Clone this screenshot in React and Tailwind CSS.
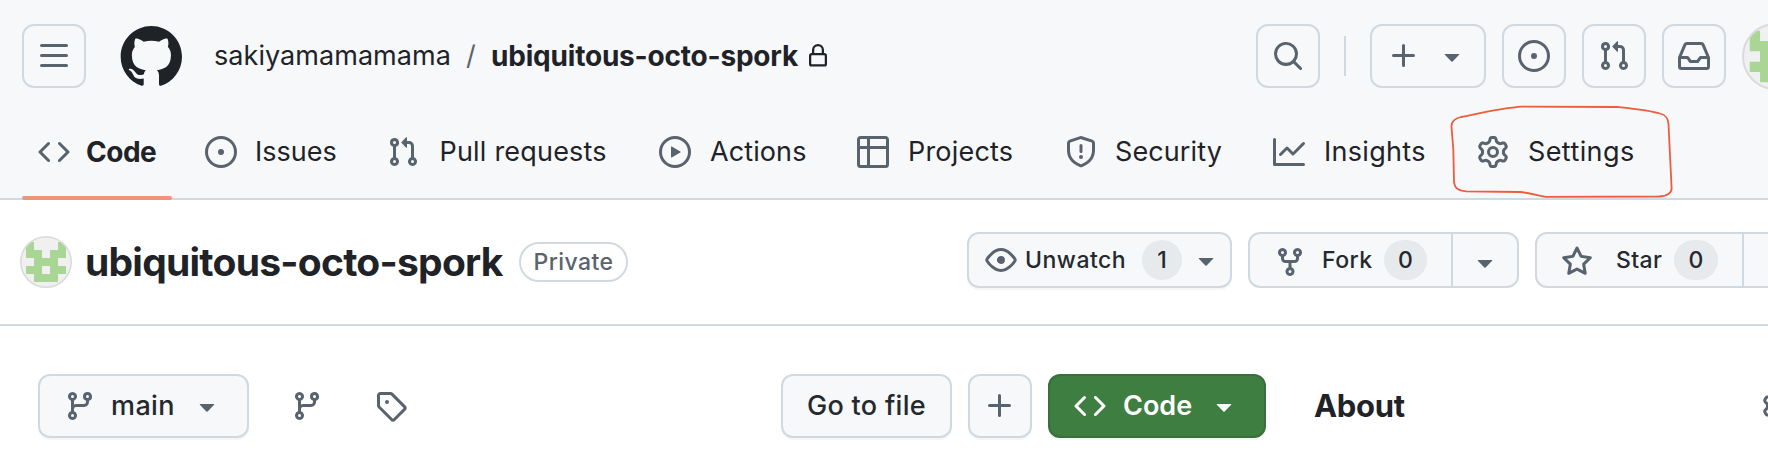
const P = {
  bars: "M1 2.75A.75.75 0 0 1 1.75 2h12.5a.75.75 0 0 1 0 1.5H1.75A.75.75 0 0 1 1 2.75Zm0 5A.75.75 0 0 1 1.75 7h12.5a.75.75 0 0 1 0 1.5H1.75A.75.75 0 0 1 1 7.75ZM1.75 12h12.5a.75.75 0 0 1 0 1.5H1.75a.75.75 0 0 1 0-1.5Z",
  code: "m11.28 3.22 4.25 4.25a.75.75 0 0 1 0 1.06l-4.25 4.25a.749.749 0 0 1-1.275-.326.749.749 0 0 1 .215-.734L13.94 8l-3.72-3.72a.749.749 0 0 1 .326-1.275.749.749 0 0 1 .734.215Zm-6.56 0a.751.751 0 0 1 1.042.018.751.751 0 0 1 .018 1.042L2.06 8l3.72 3.72a.749.749 0 0 1-.326 1.275.749.749 0 0 1-.734-.215L.47 8.53a.75.75 0 0 1 0-1.06Z",
  issue: "M8 9.5a1.5 1.5 0 1 0 0-3 1.5 1.5 0 0 0 0 3ZM8 0a8 8 0 1 1 0 16A8 8 0 0 1 8 0ZM1.5 8a6.5 6.5 0 1 0 13 0 6.5 6.5 0 0 0-13 0Z",
  pull: "M1.5 3.25a2.25 2.25 0 1 1 3 2.122v5.256a2.251 2.251 0 1 1-1.5 0V5.372A2.25 2.25 0 0 1 1.5 3.25Zm5.677-.177L9.573.677A.25.25 0 0 1 10 .854V2.5h1A2.5 2.5 0 0 1 13.5 5v5.628a2.251 2.251 0 1 1-1.5 0V5a1 1 0 0 0-1-1h-1v1.646a.25.25 0 0 1-.427.177L7.177 3.427a.25.25 0 0 1 0-.354ZM3.75 2.5a.75.75 0 1 0 0 1.5.75.75 0 0 0 0-1.5Zm0 9.5a.75.75 0 1 0 0 1.5.75.75 0 0 0 0-1.5Zm8.25.75a.75.75 0 1 0 1.5 0 .75.75 0 0 0-1.5 0Z",
  play: "M8 0a8 8 0 1 1 0 16A8 8 0 0 1 8 0ZM1.5 8a6.5 6.5 0 1 0 13 0 6.5 6.5 0 0 0-13 0Zm4.879-2.773 4.264 2.559a.25.25 0 0 1 0 .428l-4.264 2.559A.25.25 0 0 1 6 10.559V5.442a.25.25 0 0 1 .379-.215Z",
  table: "M0 1.75C0 .784.784 0 1.75 0h12.5C15.216 0 16 .784 16 1.75v12.5A1.75 1.75 0 0 1 14.25 16H1.75A1.75 1.75 0 0 1 0 14.25ZM6.5 6.5v8h7.75a.25.25 0 0 0 .25-.25V6.5Zm8-1.5V1.75a.25.25 0 0 0-.25-.25H6.5V5Zm-13 1.5v7.75c0 .138.112.25.25.25H5v-8ZM5 5V1.5H1.75a.25.25 0 0 0-.25.25V5Z",
  shield: "M7.467.133a1.748 1.748 0 0 1 1.066 0l5.25 1.68A1.75 1.75 0 0 1 15 3.48V7c0 1.566-.32 3.182-1.303 4.682-.983 1.498-2.585 2.813-5.032 3.855a1.697 1.697 0 0 1-1.33 0c-2.447-1.042-4.049-2.357-5.032-3.855C1.32 10.182 1 8.566 1 7V3.48a1.75 1.75 0 0 1 1.217-1.667Zm.61 1.429a.25.25 0 0 0-.153 0l-5.25 1.68a.25.25 0 0 0-.174.238V7c0 1.358.275 2.666 1.057 3.86.784 1.194 2.121 2.34 4.366 3.297a.196.196 0 0 0 .154 0c2.245-.956 3.582-2.104 4.366-3.298C13.225 9.666 13.5 8.36 13.5 7V3.48a.251.251 0 0 0-.174-.237l-5.25-1.68ZM8.75 4.75v3a.75.75 0 0 1-1.5 0v-3a.75.75 0 0 1 1.5 0ZM9 10.5a1 1 0 1 1-2 0 1 1 0 0 1 2 0Z",
  graph: "M1.5 1.75V13.5h13.75a.75.75 0 0 1 0 1.5H.75a.75.75 0 0 1-.75-.75V1.75a.75.75 0 0 1 1.5 0Zm14.28 2.53-5.25 5.25a.75.75 0 0 1-1.06 0L7 7.06 4.28 9.78a.751.751 0 0 1-1.042-.018.751.751 0 0 1-.018-1.042l3.25-3.25a.75.75 0 0 1 1.06 0L10 7.94l4.72-4.72a.751.751 0 0 1 1.042.018.751.751 0 0 1 .018 1.042Z",
  gear: "M8 0a8.2 8.2 0 0 1 .701.031C9.444.095 9.99.645 10.16 1.29l.288 1.107c.018.066.079.158.212.224.231.114.454.243.668.386.123.082.233.09.299.071l1.103-.303c.644-.176 1.392.021 1.82.63.27.385.506.792.704 1.218.315.675.111 1.422-.364 1.891l-.814.806c-.049.048-.098.147-.088.294.016.257.016.515 0 .772-.01.147.038.246.088.294l.814.806c.475.469.679 1.216.364 1.891a7.977 7.977 0 0 1-.704 1.217c-.428.61-1.176.807-1.82.63l-1.102-.302c-.067-.019-.177-.011-.3.071a5.909 5.909 0 0 1-.668.386c-.133.066-.194.158-.211.224l-.29 1.106c-.168.646-.715 1.196-1.458 1.26a8.006 8.006 0 0 1-1.402 0c-.743-.064-1.289-.614-1.458-1.26l-.289-1.106c-.018-.066-.079-.158-.212-.224a5.738 5.738 0 0 1-.668-.386c-.123-.082-.233-.09-.299-.071l-1.103.303c-.644.176-1.392-.021-1.82-.63a8.12 8.12 0 0 1-.704-1.218c-.315-.675-.111-1.422.363-1.891l.815-.806c.05-.048.098-.147.088-.294a6.214 6.214 0 0 1 0-.772c.01-.147-.038-.246-.088-.294l-.815-.806C.635 6.045.431 5.298.746 4.623a7.92 7.92 0 0 1 .704-1.217c.428-.61 1.176-.807 1.82-.63l1.102.302c.067.019.177.011.3-.071.214-.143.437-.272.668-.386.133-.066.194-.158.211-.224l.29-1.106C6.009.645 6.556.095 7.299.03 7.53.01 7.764 0 8 0Zm-.571 1.525c-.036.003-.108.036-.137.146l-.289 1.105c-.147.561-.549.967-.998 1.189-.173.086-.34.183-.5.29-.417.278-.97.423-1.529.27l-1.103-.303c-.109-.03-.175.016-.195.045-.22.312-.412.644-.573.99-.014.031-.021.11.059.19l.815.806c.411.406.562.957.53 1.456a4.709 4.709 0 0 0 0 .582c.032.499-.119 1.05-.53 1.456l-.815.806c-.081.08-.073.159-.059.19.162.346.353.677.573.989.02.03.085.076.195.046l1.102-.303c.56-.153 1.113-.008 1.53.27.161.107.328.204.501.29.447.222.85.629.997 1.189l.289 1.105c.029.109.101.143.137.146a6.6 6.6 0 0 0 1.142 0c.036-.003.108-.036.137-.146l.289-1.105c.147-.561.549-.967.998-1.189.173-.086.34-.183.5-.29.417-.278.97-.423 1.529-.27l1.103.303c.109.029.175-.016.195-.045.22-.313.411-.644.573-.99.014-.031.021-.11-.059-.19l-.815-.806c-.411-.406-.562-.957-.53-1.456a4.709 4.709 0 0 0 0-.582c-.032-.499.119-1.05.53-1.456l.815-.806c.081-.08.073-.159.059-.19a6.464 6.464 0 0 0-.573-.989c-.02-.03-.085-.076-.195-.046l-1.102.303c-.56.153-1.113.008-1.53-.27a4.44 4.44 0 0 0-.501-.29c-.447-.222-.85-.629-.997-1.189l-.289-1.105c-.029-.11-.101-.143-.137-.146a6.6 6.6 0 0 0-1.142 0ZM11 8a3 3 0 1 1-6 0 3 3 0 0 1 6 0ZM9.5 8a1.5 1.5 0 1 0-3.001.001A1.5 1.5 0 0 0 9.5 8Z",
  lock: "M4 4a4 4 0 0 1 8 0v2h.25c.966 0 1.75.784 1.75 1.75v5.5A1.75 1.75 0 0 1 12.25 15h-8.5A1.75 1.75 0 0 1 2 13.25v-5.5C2 6.784 2.784 6 3.75 6H4Zm8.25 3.5h-8.5a.25.25 0 0 0-.25.25v5.5c0 .138.112.25.25.25h8.5a.25.25 0 0 0 .25-.25v-5.5a.25.25 0 0 0-.25-.25ZM10.5 6V4a2.5 2.5 0 1 0-5 0v2Z",
  search: "M10.68 11.74a6 6 0 0 1-7.922-8.982 6 6 0 0 1 8.982 7.922l3.04 3.04a.749.749 0 0 1-.326 1.275.749.749 0 0 1-.734-.215ZM11.5 7a4.499 4.499 0 1 0-8.997 0A4.499 4.499 0 0 0 11.5 7Z",
  plus: "M7.75 2a.75.75 0 0 1 .75.75V7h4.25a.75.75 0 0 1 0 1.5H8.5v4.25a.75.75 0 0 1-1.5 0V8.5H2.75a.75.75 0 0 1 0-1.5H7V2.75A.75.75 0 0 1 7.75 2Z",
  caret: "m4.427 7.427 3.396 3.396a.25.25 0 0 0 .354 0l3.396-3.396A.25.25 0 0 0 11.396 7H4.604a.25.25 0 0 0-.177.427Z",
  inbox: "M2.8 2.06A1.75 1.75 0 0 1 4.41 1h7.18c.7 0 1.333.417 1.61 1.06l2.74 6.395c.04.093.06.194.06.295v4.5A1.75 1.75 0 0 1 14.25 15H1.75A1.75 1.75 0 0 1 0 13.25v-4.5c0-.101.02-.202.06-.295Zm1.61.44a.25.25 0 0 0-.23.152L1.887 8H4.75a.75.75 0 0 1 .6.3L6.625 10h2.75l1.275-1.7a.75.75 0 0 1 .6-.3h2.863L11.82 2.652a.25.25 0 0 0-.23-.152Zm10.09 7h-2.875l-1.275 1.7a.75.75 0 0 1-.6.3h-3.5a.75.75 0 0 1-.6-.3L4.375 9.5H1.5v3.75c0 .138.112.25.25.25h12.5a.25.25 0 0 0 .25-.25Z",
  eye: "M8 2c1.981 0 3.671.992 4.933 2.078 1.27 1.091 2.187 2.345 2.637 3.023a1.62 1.62 0 0 1 0 1.798c-.45.678-1.367 1.932-2.637 3.023C11.67 13.008 9.981 14 8 14c-1.981 0-3.671-.992-4.933-2.078C1.797 10.83.88 9.576.43 8.898a1.62 1.62 0 0 1 0-1.798c.45-.677 1.367-1.931 2.637-3.022C4.33 2.992 6.019 2 8 2ZM1.679 7.932a.12.12 0 0 0 0 .136c.411.622 1.241 1.75 2.366 2.717C5.176 11.758 6.527 12.5 8 12.5c1.473 0 2.825-.742 3.955-1.715 1.124-.967 1.954-2.096 2.366-2.717a.12.12 0 0 0 0-.136c-.412-.621-1.242-1.75-2.366-2.717C10.824 4.242 9.473 3.5 8 3.5c-1.473 0-2.825.742-3.955 1.715-1.124.967-1.954 2.096-2.366 2.717ZM8 10a2 2 0 1 1-.001-3.999A2 2 0 0 1 8 10Z",
  fork: "M5 5.372v.878c0 .414.336.75.75.75h4.5a.75.75 0 0 0 .75-.75v-.878a2.25 2.25 0 1 1 1.5 0v.878a2.25 2.25 0 0 1-2.25 2.25h-1.5v2.128a2.251 2.251 0 1 1-1.5 0V8.5h-1.5A2.25 2.25 0 0 1 3.5 6.25v-.878a2.25 2.25 0 1 1 1.5 0ZM5 3.25a.75.75 0 1 0-1.5 0 .75.75 0 0 0 1.5 0Zm6.75.75a.75.75 0 1 0 0-1.5.75.75 0 0 0 0 1.5Zm-3 8.75a.75.75 0 1 0-1.5 0 .75.75 0 0 0 1.5 0Z",
  star: "M8 .25a.75.75 0 0 1 .673.418l1.882 3.815 4.21.612a.75.75 0 0 1 .416 1.279l-3.046 2.97.719 4.192a.751.751 0 0 1-1.088.791L8 12.347l-3.766 1.98a.75.75 0 0 1-1.088-.79l.72-4.194L.818 6.374a.75.75 0 0 1 .416-1.28l4.21-.611L7.327.668A.75.75 0 0 1 8 .25Zm0 2.445L6.615 5.5a.75.75 0 0 1-.564.41l-3.097.45 2.24 2.184a.75.75 0 0 1 .216.664l-.528 3.084 2.769-1.456a.75.75 0 0 1 .698 0l2.77 1.456-.53-3.084a.75.75 0 0 1 .216-.664l2.24-2.183-3.096-.45a.75.75 0 0 1-.564-.41L8 2.694Z",
  branch: "M9.5 3.25a2.25 2.25 0 1 1 3 2.122V6A2.5 2.5 0 0 1 10 8.5H6a1 1 0 0 0-1 1v1.128a2.251 2.251 0 1 1-1.5 0V5.372a2.25 2.25 0 1 1 1.5 0v1.836A2.493 2.493 0 0 1 6 7h4a1 1 0 0 0 1-1v-.628A2.25 2.25 0 0 1 9.5 3.25Zm-6 0a.75.75 0 1 0 1.5 0 .75.75 0 0 0-1.5 0Zm8.25-.75a.75.75 0 1 0 0 1.5.75.75 0 0 0 0-1.5ZM4.25 12a.75.75 0 1 0 0 1.5.75.75 0 0 0 0-1.5Z",
  tag: "M1 7.775V2.75C1 1.784 1.784 1 2.75 1h5.025c.464 0 .91.184 1.238.513l6.25 6.25a1.75 1.75 0 0 1 0 2.474l-5.026 5.026a1.75 1.75 0 0 1-2.474 0l-6.25-6.25A1.752 1.752 0 0 1 1 7.775Zm1.5 0c0 .066.026.13.073.177l6.25 6.25a.25.25 0 0 0 .354 0l5.025-5.025a.25.25 0 0 0 0-.354l-6.25-6.25a.25.25 0 0 0-.177-.073H2.75a.25.25 0 0 0-.25.25ZM6 5a1 1 0 1 1 0 2 1 1 0 0 1 0-2Z",
};

const MARK =
  "M12.5.75C6.146.75 1 5.896 1 12.25c0 5.089 3.292 9.387 7.863 10.91.575.101.79-.244.79-.546 0-.273-.014-1.178-.014-2.142-2.889.532-3.636-.704-3.866-1.35-.13-.331-.69-1.352-1.18-1.625-.402-.216-.977-.748-.014-.762.906-.014 1.553.834 1.769 1.179 1.035 1.74 2.688 1.25 3.349.948.1-.747.402-1.25.733-1.538-2.559-.287-5.232-1.279-5.232-5.678 0-1.25.445-2.285 1.178-3.09-.115-.288-.517-1.467.115-3.048 0 0 .963-.302 3.163 1.179.92-.259 1.897-.388 2.875-.388.977 0 1.955.13 2.875.388 2.2-1.495 3.162-1.179 3.162-1.179.633 1.581.23 2.76.115 3.048.733.805 1.179 1.825 1.179 3.09 0 4.413-2.688 5.39-5.247 5.678.417.36.776 1.05.776 2.128 0 1.538-.014 2.774-.014 3.162 0 .302.216.662.79.547C20.709 21.637 24 17.324 24 12.25 24 5.896 18.854.75 12.5.75Z";

function Icon({ name, className = "" }) {
  return (
    <svg viewBox="0 0 16 16" fill="currentColor" fillRule="evenodd" className={`size-8 shrink-0 ${className}`}>
      <path d={P[name]} />
    </svg>
  );
}

function Avatar({ className }) {
  return (
    <svg viewBox="0 0 52 52" className={`shrink-0 ${className}`}>
      <defs>
        <clipPath id="avatar-round">
          <circle cx="26" cy="26" r="25" />
        </clipPath>
      </defs>
      <circle cx="26" cy="26" r="25.2" fill="#f0f0f0" />
      <path
        clipPath="url(#avatar-round)"
        fill="#a9d694"
        d="M6 6h8v8h8v8h8v-8h8v-8h8v16h-8v8h8v8h-8v8h-24v-8h-8v-8h8v-8h-8ZM22 30v8h8v-8Z"
        fillRule="evenodd"
      />
      <circle cx="26" cy="26" r="25.2" fill="none" stroke="#dadbdc" strokeWidth="1.6" />
    </svg>
  );
}

function HeaderButton({ icon, className = "" }) {
  return (
    <button className={`flex size-16 shrink-0 items-center justify-center rounded-xl border-2 border-[#d1d9e0] text-[#59636e] ${className}`}>
      <Icon name={icon} />
    </button>
  );
}

const TABS = [
  { icon: "code", label: "Code", cls: "w-[71px] text-[28px] font-bold tracking-[-0.5px]" },
  { icon: "issue", label: "Issues", cls: "w-[86px] pl-[2px]" },
  { icon: "pull", label: "Pull requests", cls: "w-[176px] pl-[4.5px] tracking-[0.2px]" },
  { icon: "play", label: "Actions", cls: "w-[102px] pl-[3px] tracking-[0.1px]" },
  { icon: "table", label: "Projects", cls: "w-[112px] pl-[3px] tracking-[0.2px]" },
  { icon: "shield", label: "Security", cls: "w-[112px] pl-[2px] tracking-[0.1px]" },
  { icon: "graph", label: "Insights", cls: "w-[108px] pl-[3px] tracking-[0.3px]" },
  { icon: "gear", label: "Settings", cls: "w-[112px] pl-[3px] tracking-[0.4px]" },
];

function Count({ children, className }) {
  return (
    <span className={`flex h-10 shrink-0 items-center justify-center rounded-full bg-[#e7eaed] ${className}`}>{children}</span>
  );
}

const BTN = "flex shrink-0 items-center rounded-xl border-2 border-[#d1d9e0] bg-[#f6f8fa] font-medium text-[#25292e]";

export default function App() {
  return (
    <div className="relative h-[466px] w-[1768px] overflow-hidden bg-white font-['Inter',sans-serif] text-[27px] whitespace-nowrap text-[#1f2328]">
      <header className="h-[200px] border-b-2 border-[#d1d9e0] bg-[#f6f8fa]">
        <div className="flex h-28 items-center pl-[22px]">
          <HeaderButton icon="bars" />
          <svg viewBox="0 0 24 24" fill="currentColor" className="ml-8 size-16 shrink-0">
            <path d={MARK} />
          </svg>
          <span className="ml-8 w-[252px] shrink-0 tracking-[0.05px]">sakiyamamamama</span>
          <span className="w-[25px] shrink-0 text-[#59636e]">/</span>
          <span className="w-[315px] shrink-0 text-[28px] font-bold tracking-[-0.2px]">ubiquitous-octo-spork</span>
          <svg viewBox="0 0 16 16" fill="currentColor" fillRule="evenodd" className="size-6 shrink-0">
            <path d={P.lock} />
          </svg>
          <HeaderButton icon="search" className="ml-[426px]" />
          <div className="ml-6 h-10 w-0.5 shrink-0 bg-[#d1d9e0]" />
          <button className="ml-6 flex h-16 w-[116px] shrink-0 items-center rounded-xl border-2 border-[#d1d9e0] pl-4 text-[#59636e]">
            <Icon name="plus" />
            <Icon name="caret" className="ml-4" />
          </button>
          <HeaderButton icon="issue" className="ml-4" />
          <HeaderButton icon="pull" className="ml-4" />
          <HeaderButton icon="inbox" className="ml-4" />
          <Avatar className="ml-4 size-[67px]" />
        </div>
        <nav className="flex h-[88px] gap-4 pl-[22px]">
          {TABS.map((t, i) => (
            <a key={t.label} className="flex shrink-0 flex-col px-0">
              <span className="flex h-[84px] items-center gap-4 px-4 pb-1">
                <Icon name={t.icon} className="text-[#59636e]" />
                <span className={t.cls}>{t.label}</span>
              </span>
              {i === 0 && <span className="h-1 w-[150px] shrink-0 rounded-full bg-[#f0937b]" />}
            </a>
          ))}
        </nav>
      </header>

      <section className="flex h-[126px] border-b-2 border-[#d1d9e0] pl-5">
        <Avatar className="mt-9 size-[52px]" />
        <h1 className="mt-9 ml-[13px] w-[434px] shrink-0 text-[39px] leading-[52px] font-bold tracking-[-0.75px]">ubiquitous-octo-spork</h1>
        <span className="mt-[42px] flex h-10 w-[109px] shrink-0 items-center justify-center rounded-full border-2 border-[#d1d9e0] text-[23px] font-medium tracking-[0.4px] text-[#59636e]">
          Private
        </span>
        <div className="mt-8 ml-[339px] flex gap-4 text-[23px]">
          <button className={`${BTN} h-14 w-[265px] pl-4 shadow-[0_2px_0_rgba(31,35,40,0.04)]`}>
            <Icon name="eye" className="text-[#59636e]" />
            <span className="ml-2 w-[117px] text-left tracking-[0.5px]">Unwatch</span>
            <Count className="w-10">1</Count>
            <Icon name="caret" className="ml-2 text-[#59636e]" />
          </button>
          <div className={`${BTN} h-14 w-[271px] pl-6`}>
            <Icon name="fork" className="mt-1 text-[#59636e]" />
            <span className="ml-4 w-[62px] tracking-[0.5px]">Fork</span>
            <Count className="w-[43px]">0</Count>
            <div className="ml-6 flex h-[52px] items-center border-l-2 border-[#d1d9e0] pl-4 text-[#59636e]">
              <Icon name="caret" className="mt-1" />
            </div>
          </div>
          <div className={`${BTN} h-14 w-[290px] pl-6`}>
            <Icon name="star" className="mt-1 text-[#59636e]" />
            <span className="ml-[23px] w-[58px] tracking-[0.4px]">Star</span>
            <Count className="w-11">0</Count>
            <div className="ml-6 h-[52px] border-l-2 border-[#d1d9e0]" />
          </div>
        </div>
      </section>

      <section className="flex h-40 items-center pl-[38px]">
        <button className={`${BTN} h-16 w-[211px] pl-6 shadow-[0_2px_0_rgba(31,35,40,0.04)]`}>
          <Icon name="branch" className="text-[#59636e]" />
          <span className="ml-[15px] w-[80px] text-left tracking-[0.4px]">main</span>
          <Icon name="caret" className="text-[#59636e]" />
        </button>
        <Icon name="branch" className="ml-[42px] text-[#59636e]" />
        <Icon name="tag" className="ml-[52px] text-[#59636e]" />
        <button className={`${BTN} ml-[374px] h-16 w-[171px] justify-center tracking-[0.3px] shadow-[0_2px_0_rgba(31,35,40,0.04)]`}>Go to file</button>
        <button className={`${BTN} ml-4 h-16 w-16 justify-center shadow-[0_2px_0_rgba(31,35,40,0.04)]`}>
          <Icon name="plus" className="text-[#59636e]" />
        </button>
        <button className="ml-4 flex h-16 w-[218px] shrink-0 items-center rounded-xl border-2 border-[#386f3a] bg-[#3f7e41] pl-6 font-semibold text-white shadow-[0_2px_0_rgba(31,35,40,0.04)]">
          <Icon name="code" />
          <span className="ml-[17px] w-[85px] text-left">Code</span>
          <Icon name="caret" />
        </button>
        <h2 className="ml-12 w-[448px] shrink-0 text-[31px] font-bold tracking-[-0.3px]">About</h2>
        <Icon name="gear" className="text-[#59636e]" />
      </section>

      {/* hand-drawn outline around the Settings tab */}
      <svg viewBox="0 0 230 96" className="pointer-events-none absolute top-[104px] left-[1448px] h-24 w-[230px]" fill="none" stroke="#ec5c3e" strokeWidth="1.8" strokeLinejoin="round">
        <path d="M3.5 23C3 17 7 14.500 13 13C38 8 55 4 74 2.700L170 3C184 4.500 203 6.500 212 9.500C218 11 220 14 220.500 20L223.600 84C224 89 219 92 211 92.500L98 92.800C88 91 82 89 72 88L18 87.300C10 87 6.500 84 6 78L5.300 45Z" />
      </svg>
    </div>
  );
}
